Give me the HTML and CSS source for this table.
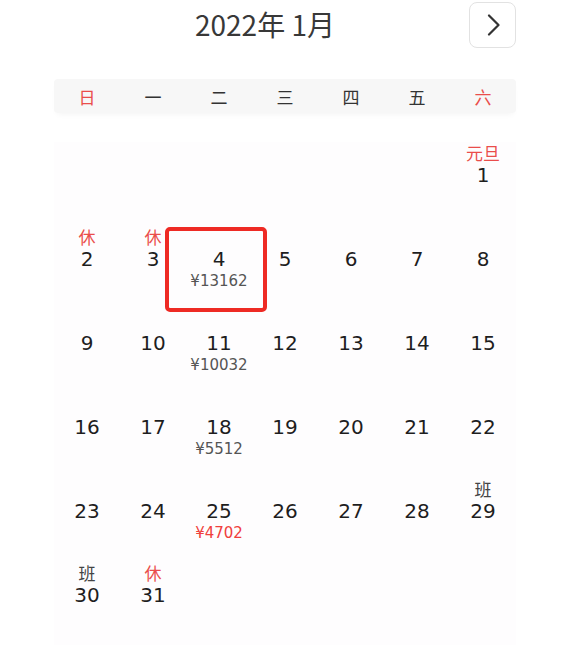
FILE: index.html
```html
<!DOCTYPE html>
<html lang="zh">
<head>
<meta charset="utf-8">
<link rel="stylesheet" href="styles.css">
</head>
<body>
<div class="cal">
  <div class="header">
    <div class="title">2022年 1月</div>
    <button class="next" aria-label="下个月">
      <svg width="14" height="22" viewBox="0 0 14 22"><path d="M2 1.5 L11.5 11 L2 20.5" fill="none" stroke="#333" stroke-width="2.2" stroke-linecap="round" stroke-linejoin="round"/></svg>
    </button>
  </div>
  <div class="weekdays">
    <span class="red">日</span><span>一</span><span>二</span><span>三</span><span>四</span><span>五</span><span class="red">六</span>
  </div>
  <div class="grid">
    <div class="cell"></div><div class="cell"></div><div class="cell"></div><div class="cell"></div><div class="cell"></div><div class="cell"></div>
    <div class="cell"><span class="tag red">元旦</span><span class="num">1</span></div>

    <div class="cell"><span class="tag red">休</span><span class="num">2</span></div>
    <div class="cell"><span class="tag red">休</span><span class="num">3</span></div>
    <div class="cell selected"><span class="tag"></span><span class="num">4</span><span class="price">¥13162</span></div>
    <div class="cell"><span class="tag"></span><span class="num">5</span></div>
    <div class="cell"><span class="tag"></span><span class="num">6</span></div>
    <div class="cell"><span class="tag"></span><span class="num">7</span></div>
    <div class="cell"><span class="tag"></span><span class="num">8</span></div>

    <div class="cell"><span class="tag"></span><span class="num">9</span></div>
    <div class="cell"><span class="tag"></span><span class="num">10</span></div>
    <div class="cell"><span class="tag"></span><span class="num">11</span><span class="price">¥10032</span></div>
    <div class="cell"><span class="tag"></span><span class="num">12</span></div>
    <div class="cell"><span class="tag"></span><span class="num">13</span></div>
    <div class="cell"><span class="tag"></span><span class="num">14</span></div>
    <div class="cell"><span class="tag"></span><span class="num">15</span></div>

    <div class="cell"><span class="tag"></span><span class="num">16</span></div>
    <div class="cell"><span class="tag"></span><span class="num">17</span></div>
    <div class="cell"><span class="tag"></span><span class="num">18</span><span class="price">¥5512</span></div>
    <div class="cell"><span class="tag"></span><span class="num">19</span></div>
    <div class="cell"><span class="tag"></span><span class="num">20</span></div>
    <div class="cell"><span class="tag"></span><span class="num">21</span></div>
    <div class="cell"><span class="tag"></span><span class="num">22</span></div>

    <div class="cell"><span class="tag"></span><span class="num">23</span></div>
    <div class="cell"><span class="tag"></span><span class="num">24</span></div>
    <div class="cell"><span class="tag"></span><span class="num">25</span><span class="price low">¥4702</span></div>
    <div class="cell"><span class="tag"></span><span class="num">26</span></div>
    <div class="cell"><span class="tag"></span><span class="num">27</span></div>
    <div class="cell"><span class="tag"></span><span class="num">28</span></div>
    <div class="cell"><span class="tag grey">班</span><span class="num">29</span></div>

    <div class="cell"><span class="tag grey">班</span><span class="num">30</span></div>
    <div class="cell"><span class="tag red">休</span><span class="num">31</span></div>
  </div>
</div>
</body>
</html>
```
FILE: styles.css
```css
html, body {
  margin: 0;
  padding: 0;
  background: #ffffff;
}
body {
  font-family: "DejaVu Sans", "Noto Sans CJK SC", sans-serif;
  color: #222;
}
.cal {
  width: 462px;
  margin-left: 54px;
}
.header {
  display: flex;
  align-items: center;
  height: 47px;
  margin-top: 1px;
}
.title {
  padding-left: 141px;
  font-family: "Noto Sans CJK SC", sans-serif;
  font-size: 28px;
  color: #383838;
  line-height: 47px;
}
.next {
  margin-left: auto;
  width: 47px;
  height: 46px;
  border: 1px solid #e2e2e2;
  border-radius: 8px;
  background: #fff;
  display: flex;
  align-items: center;
  justify-content: center;
  padding: 0;
}
.next svg { margin-left: 2px; }
.weekdays {
  margin-top: 31px;
  height: 34px;
  display: grid;
  grid-template-columns: repeat(7, 66px);
  align-items: center;
  background: #f7f7f7;
  border-radius: 4px;
  box-shadow: 0 4px 6px -3px rgba(0,0,0,0.05);
  font-family: "Noto Sans CJK SC", sans-serif;
  font-size: 17px;
  color: #333;
}
.weekdays span { text-align: center; }
.red { color: #ea4d4b; }
.grid {
  margin-top: 29px;
  display: grid;
  grid-template-columns: repeat(7, 66px);
  grid-auto-rows: 84px;
  background: #fefdfe;
}
.cell {
  position: relative;
  display: flex;
  flex-direction: column;
  align-items: center;
}
.tag {
  height: 22px;
  line-height: 22px;
  font-family: "Noto Sans CJK SC", sans-serif;
  font-size: 17px;
}
.tag.grey { color: #444; }
.num {
  height: 22px;
  line-height: 22px;
  font-size: 20px;
  color: #1e1e1e;
}
.price {
  height: 22px;
  line-height: 22px;
  font-size: 15px;
  color: #555;
}
.price.low { color: #f0403c; }
.selected::after {
  content: "";
  position: absolute;
  left: calc(50% - 3px);
  top: 1px;
  width: 102px;
  height: 85px;
  transform: translateX(-50%);
  box-sizing: border-box;
  border: 4px solid #ee2a24;
  border-radius: 5px;
}
```
